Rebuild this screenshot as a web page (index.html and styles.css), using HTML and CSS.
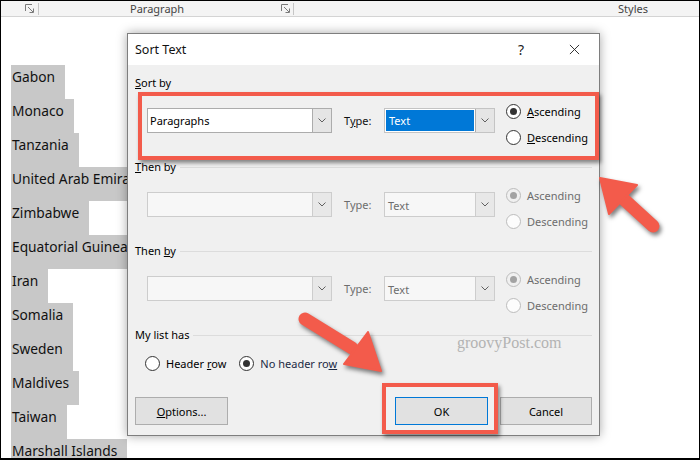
FILE: index.html
```html
<!DOCTYPE html>
<html lang="en">

<head>
    <meta charset="UTF-8">
    <title>Sort Text</title>
    <link rel="stylesheet" href="styles.css">
</head>

<body>
    <div class="screen">
        <div class="ribbon">
            <svg class="launcher" viewBox="0 0 10 10">
                <path d="M0.5 7V0.5H7" />
                <path d="M3 3L8 8M8.5 4.5V8.5H4.5" />
            </svg>
            <span class="sep"></span>
            <span class="ribbon-title">Paragraph</span>
            <svg class="launcher launcher-2" viewBox="0 0 10 10">
                <path d="M0.5 7V0.5H7" />
                <path d="M3 3L8 8M8.5 4.5V8.5H4.5" />
            </svg>
            <span class="sep sep-2"></span>
            <span class="ribbon-styles">Styles</span>
        </div>

        <div class="doc">
            <p class="para"><span>Gabon</span></p>
            <p class="para"><span>Monaco</span></p>
            <p class="para"><span>Tanzania</span></p>
            <p class="para"><span>United Arab Emirates</span></p>
            <p class="para"><span>Zimbabwe</span></p>
            <p class="para"><span>Equatorial Guinea</span></p>
            <p class="para"><span>Iran</span></p>
            <p class="para"><span>Somalia</span></p>
            <p class="para"><span>Sweden</span></p>
            <p class="para"><span>Maldives</span></p>
            <p class="para"><span>Taiwan</span></p>
            <p class="para"><span>Marshall Islands</span></p>
        </div>

        <div class="dialog">
            <div class="titlebar">
                <span class="title">Sort Text</span>
                <span class="title-btn help">?</span>
                <span class="title-btn">
                    <svg class="close-icon" viewBox="0 0 12 12">
                        <path d="M1 1L11 11M11 1L1 11" />
                    </svg>
                </span>
            </div>

            <div class="dlg-body">
                <div class="group">
                    <div class="group-label no-line"><span><u>S</u>ort by</span></div>
                    <div class="sort-row">
                        <div class="combo">
                            <span class="combo-text">Paragraphs</span>
                            <span class="combo-btn"><svg class="chev" viewBox="0 0 8 5"><path d="M0.5 0.5L4 4L7.5 0.5" /></svg></span>
                        </div>
                        <span class="type-label">T<u>y</u>pe:</span>
                        <div class="combo type-combo">
                            <span class="combo-text"><span class="selected">Text</span></span>
                            <span class="combo-btn"><svg class="chev" viewBox="0 0 8 5"><path d="M0.5 0.5L4 4L7.5 0.5" /></svg></span>
                        </div>
                        <div class="radios">
                            <div class="radio"><span class="circle on"></span><span><u>A</u>scending</span></div>
                            <div class="radio"><span class="circle"></span><span><u>D</u>escending</span></div>
                        </div>
                    </div>
                </div>

                <div class="group">
                    <div class="group-label"><span><u>T</u>hen by</span></div>
                    <div class="sort-row disabled">
                        <div class="combo">
                            <span class="combo-text"></span>
                            <span class="combo-btn"><svg class="chev" viewBox="0 0 8 5"><path d="M0.5 0.5L4 4L7.5 0.5" /></svg></span>
                        </div>
                        <span class="type-label">Type:</span>
                        <div class="combo type-combo">
                            <span class="combo-text">Text</span>
                            <span class="combo-btn"><svg class="chev" viewBox="0 0 8 5"><path d="M0.5 0.5L4 4L7.5 0.5" /></svg></span>
                        </div>
                        <div class="radios">
                            <div class="radio"><span class="circle on"></span><span>Ascending</span></div>
                            <div class="radio"><span class="circle"></span><span>Descending</span></div>
                        </div>
                    </div>
                </div>

                <div class="group">
                    <div class="group-label"><span>Then <u>b</u>y</span></div>
                    <div class="sort-row disabled">
                        <div class="combo">
                            <span class="combo-text"></span>
                            <span class="combo-btn"><svg class="chev" viewBox="0 0 8 5"><path d="M0.5 0.5L4 4L7.5 0.5" /></svg></span>
                        </div>
                        <span class="type-label">Type:</span>
                        <div class="combo type-combo">
                            <span class="combo-text">Text</span>
                            <span class="combo-btn"><svg class="chev" viewBox="0 0 8 5"><path d="M0.5 0.5L4 4L7.5 0.5" /></svg></span>
                        </div>
                        <div class="radios">
                            <div class="radio"><span class="circle on"></span><span>Ascending</span></div>
                            <div class="radio"><span class="circle"></span><span>Descending</span></div>
                        </div>
                    </div>
                </div>

                <div class="group-label"><span>My list has</span></div>
                <div class="list-row">
                    <div class="radio"><span class="circle"></span><span>Header <u>r</u>ow</span></div>
                    <div class="radio no-header"><span class="circle on"></span><span>No header ro<u>w</u></span></div>
                </div>

                <div class="buttons">
                    <span class="btn"><span><u>O</u>ptions...</span></span>
                    <span class="btn btn-ok">OK</span>
                    <span class="btn btn-cancel">Cancel</span>
                </div>
            </div>

            <div class="callout callout-sort"></div>
            <div class="callout callout-ok"></div>
            <div class="watermark">groovyPost.com</div>
        </div>

        <!-- annotation arrows -->
        <svg class="arrows" viewBox="0 0 700 460">
            <g class="arrow">
                <line x1="653" y1="226" x2="618" y2="194" />
                <polygon points="600,178 637,185 609,214" />
            </g>
            <g class="arrow">
                <line x1="305" y1="319" x2="352" y2="348" />
                <polygon points="381,371 368,332 344,364" />
            </g>
        </svg>
    </div>
</body>

</html>
```

FILE: styles.css
```css
* {
    box-sizing: border-box;
}

body {
    margin: 0;
    font-family: "Noto Sans", sans-serif;
    background: #fff;
}

.screen {
    position: relative;
    width: 700px;
    height: 460px;
    border: 1px solid #000;
    border-bottom-width: 2px;
    overflow: hidden;
    background: #fff;
}

/* ribbon strip */
.ribbon {
    display: flex;
    align-items: center;
    height: 16px;
    background: #f4f4f4;
    border-bottom: 1px solid #d4d4d4;
    font-size: 11px;
    color: #444;
}

.launcher {
    width: 10px;
    height: 10px;
    margin-left: 24px;
    fill: none;
    stroke: #7a7a7a;
    stroke-width: 1;
}

.launcher-2 {
    margin-left: 97px;
}

.sep {
    width: 1px;
    height: 12px;
    background: #c6c6c6;
    margin-left: 3px;
}

.sep-2 {
    margin-left: 2px;
}

.ribbon-title {
    margin-left: 91px;
}

.ribbon-styles {
    margin-left: auto;
    margin-right: 51px;
}

/* document text, the dialog hides everything past x=126 */
.doc {
    width: 126px;
    overflow: hidden;
    padding: 48px 0 0 10px;
    font-size: 13.75px;
    color: #111;
}

.para {
    margin: 0;
    height: 34px;
    white-space: nowrap;
}

.para span {
    display: inline-block;
    height: 34px;
    padding: 2px 10px 0 1px;
    line-height: 20px;
    background: #c8c8c8;
}

/* dialog */
.dialog {
    position: absolute;
    left: 126px;
    top: 32px;
    width: 473px;
    height: 403px;
    background: #f0f0f0;
    border: 1px solid #7e7e7e;
    box-shadow: 0 0 10px rgba(0, 0, 0, 0.35);
    font-size: 11px;
    color: #000;
}

.titlebar {
    display: flex;
    align-items: center;
    height: 31px;
    padding-left: 7px;
    padding-right: 2px;
    background: #fff;
}

.title {
    flex: 1;
    font-size: 12.5px;
    color: #111;
}

.title-btn {
    display: flex;
    align-items: center;
    justify-content: center;
    width: 46px;
    height: 31px;
}

.help {
    margin-right: 7px;
    font-size: 14px;
    color: #222;
}

.close-icon {
    width: 11px;
    height: 11px;
    fill: none;
    stroke: #222;
    stroke-width: 1;
}

.dlg-body {
    padding: 10px 7px 0 7px;
}

.group {
    margin-bottom: 13px;
}

.group-label {
    display: flex;
    align-items: center;
    height: 16px;
    line-height: 16px;
    margin-bottom: 11px;
}

.group-label::after {
    content: "";
    flex: 1;
    height: 1px;
    margin-left: 4px;
    background: #dcdcdc;
}

.group-label.no-line::after {
    display: none;
}

.sort-row {
    display: flex;
    align-items: flex-start;
    height: 44px;
    padding-left: 12px;
}

.combo {
    display: flex;
    width: 185px;
    height: 25px;
    margin-top: 6px;
    border: 1px solid #acacac;
    background: #fff;
}

.combo-text {
    flex: 1;
    padding-left: 2px;
    line-height: 23px;
    white-space: nowrap;
}

.combo-btn {
    display: flex;
    align-items: center;
    justify-content: center;
    width: 19px;
    border-left: 1px solid #acacac;
    background: #e5e5e5;
}

.chev {
    width: 8px;
    height: 5px;
    fill: none;
    stroke: #606060;
    stroke-width: 1;
}

.type-label {
    width: 40px;
    margin-left: 12px;
    margin-top: 6px;
    line-height: 25px;
    color: #111;
}

.type-combo {
    width: 111px;
    border-color: #c4c4c4;
}

.type-combo .combo-text {
    padding: 1px;
}

.selected {
    display: block;
    height: 21px;
    line-height: 21px;
    padding-left: 3px;
    background: #0078d7;
    color: #fff;
}

.radios {
    margin-left: 11px;
}

.radio {
    display: flex;
    align-items: center;
    height: 18px;
    white-space: nowrap;
}

.radios .radio + .radio {
    margin-top: 8px;
}

.circle {
    display: flex;
    align-items: center;
    justify-content: center;
    width: 15px;
    height: 15px;
    margin-right: 6px;
    border: 1px solid #333;
    border-radius: 50%;
    background: #fff;
}

.circle.on::after {
    content: "";
    width: 7px;
    height: 7px;
    border-radius: 50%;
    background: #333;
}

/* greyed out rows */
.disabled {
    color: #6d6d6d;
}

.disabled .type-label {
    color: #6d6d6d;
}

.disabled .combo {
    border-color: #cdcdcd;
    background: #f7f7f7;
}

.disabled .combo-btn {
    border-left-color: #cdcdcd;
    background: #e8e8e8;
}

.disabled .combo-text {
    padding-left: 3px;
}

.disabled .circle {
    border-color: #bcbcbc;
    background: #fcfcfc;
}

.disabled .circle.on {
    background: #f0f0f0;
}

.disabled .circle.on::after {
    background: #a3a3a3;
}

.list-row {
    display: flex;
    margin: 10px 0 0 10px;
}

.no-header {
    margin-left: 13px;
    color: #1b2a44;
}

.buttons {
    display: flex;
    margin-top: 25px;
}

.btn {
    display: flex;
    align-items: center;
    justify-content: center;
    width: 93px;
    height: 28px;
    border: 1px solid #adadad;
    background: #e1e1e1;
}

.btn-ok {
    margin-left: auto;
    border-color: #0078d7;
}

.btn-cancel {
    width: 92px;
    margin-left: 12px;
}

/* red annotation boxes */
.callout {
    position: absolute;
    border: 4px solid #f35b4b;
    box-shadow: 2px 3px 4px rgba(0, 0, 0, 0.45);
}

.callout-sort {
    left: 10px;
    top: 58px;
    width: 461px;
    height: 68px;
}

.callout-ok {
    left: 254px;
    top: 349px;
    width: 116px;
    height: 51px;
}

.watermark {
    position: absolute;
    left: 329px;
    top: 299px;
    line-height: 20px;
    font-family: "Liberation Serif", serif;
    font-size: 16px;
    color: #b3b3b3;
}

.arrows {
    position: absolute;
    left: -1px;
    top: -1px;
    width: 700px;
    height: 460px;
}

.arrow {
    fill: #f35b4b;
    stroke: #f35b4b;
    filter: drop-shadow(2px 3px 2px rgba(0, 0, 0, 0.5));
}

.arrow line {
    stroke-width: 13;
    stroke-linecap: round;
}

.arrow polygon {
    stroke-width: 2;
    stroke-linejoin: round;
}
```
